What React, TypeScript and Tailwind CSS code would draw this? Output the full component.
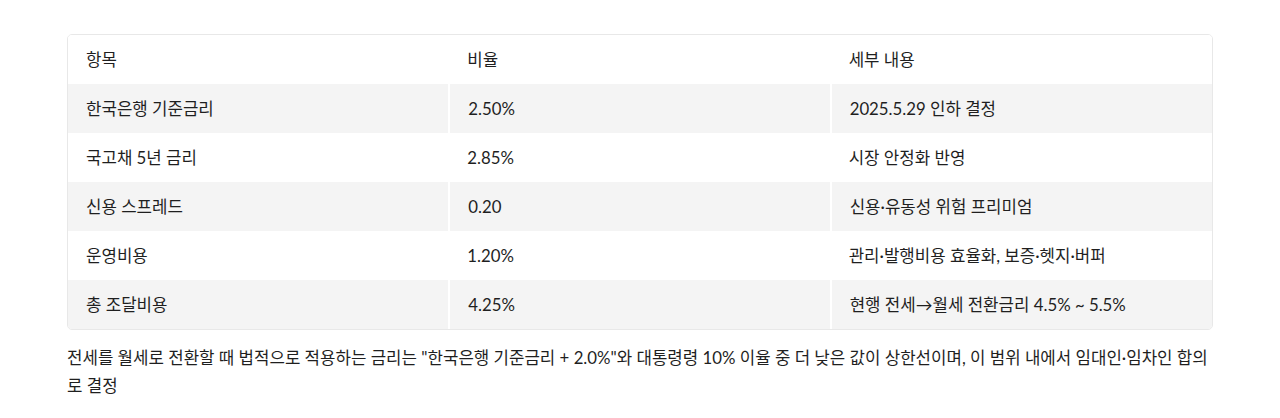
const rows = [
  { item: '한국은행 기준금리', rate: '2.50%', detail: '2025.5.29 인하 결정' },
  { item: '국고채 5년 금리', rate: '2.85%', detail: '시장 안정화 반영' },
  { item: '신용 스프레드', rate: '0.20', detail: '신용·유동성 위험 프리미엄' },
  { item: '운영비용', rate: '1.20%', detail: '관리·발행비용 효율화, 보증·헷지·버퍼' },
  { item: '총 조달비용', rate: '4.25%', detail: '현행 전세→월세 전환금리 4.5% ~ 5.5%' },
];

export default function App() {
  return (
    <div
      className="bg-white px-[67px] pt-[34px] text-[16.8px] text-[#1f1f1f]"
      style={{ fontFamily: "Lato, 'Noto Sans CJK KR', sans-serif" }}
    >
      <div className="overflow-hidden rounded-[5px] border border-[#e8e8e8]">
        <table className="w-full table-fixed border-collapse">
          <thead>
            <tr className="bg-white">
              <th className="h-[49px] px-[18px] text-left font-normal">항목</th>
              <th className="h-[49px] px-[18px] text-left font-normal">비율</th>
              <th className="h-[49px] px-[18px] text-left font-normal">세부 내용</th>
            </tr>
          </thead>
          <tbody>
            {rows.map((r, i) => {
              const grey = i % 2 === 0;
              return (
                <tr key={r.item} className={grey ? 'bg-[#f4f4f4]' : 'bg-white'}>
                  <td className="h-[49px] px-[18px]">{r.item}</td>
                  <td className={`h-[49px] px-[18px] ${grey ? 'border-l-2 border-white' : ''}`}>{r.rate}</td>
                  <td className={`h-[49px] px-[18px] ${grey ? 'border-l-2 border-white' : ''}`}>{r.detail}</td>
                </tr>
              );
            })}
          </tbody>
        </table>
      </div>
      <p className="mt-[14px] leading-[28px]">
        전세를 월세로 전환할 때 법적으로 적용하는 금리는 "한국은행 기준금리 + 2.0%"와 대통령령 10% 이율 중 더 낮은 값이 상한선이며, 이 범위 내에서 임대인·임차인 합의로 결정
      </p>
    </div>
  );
}
